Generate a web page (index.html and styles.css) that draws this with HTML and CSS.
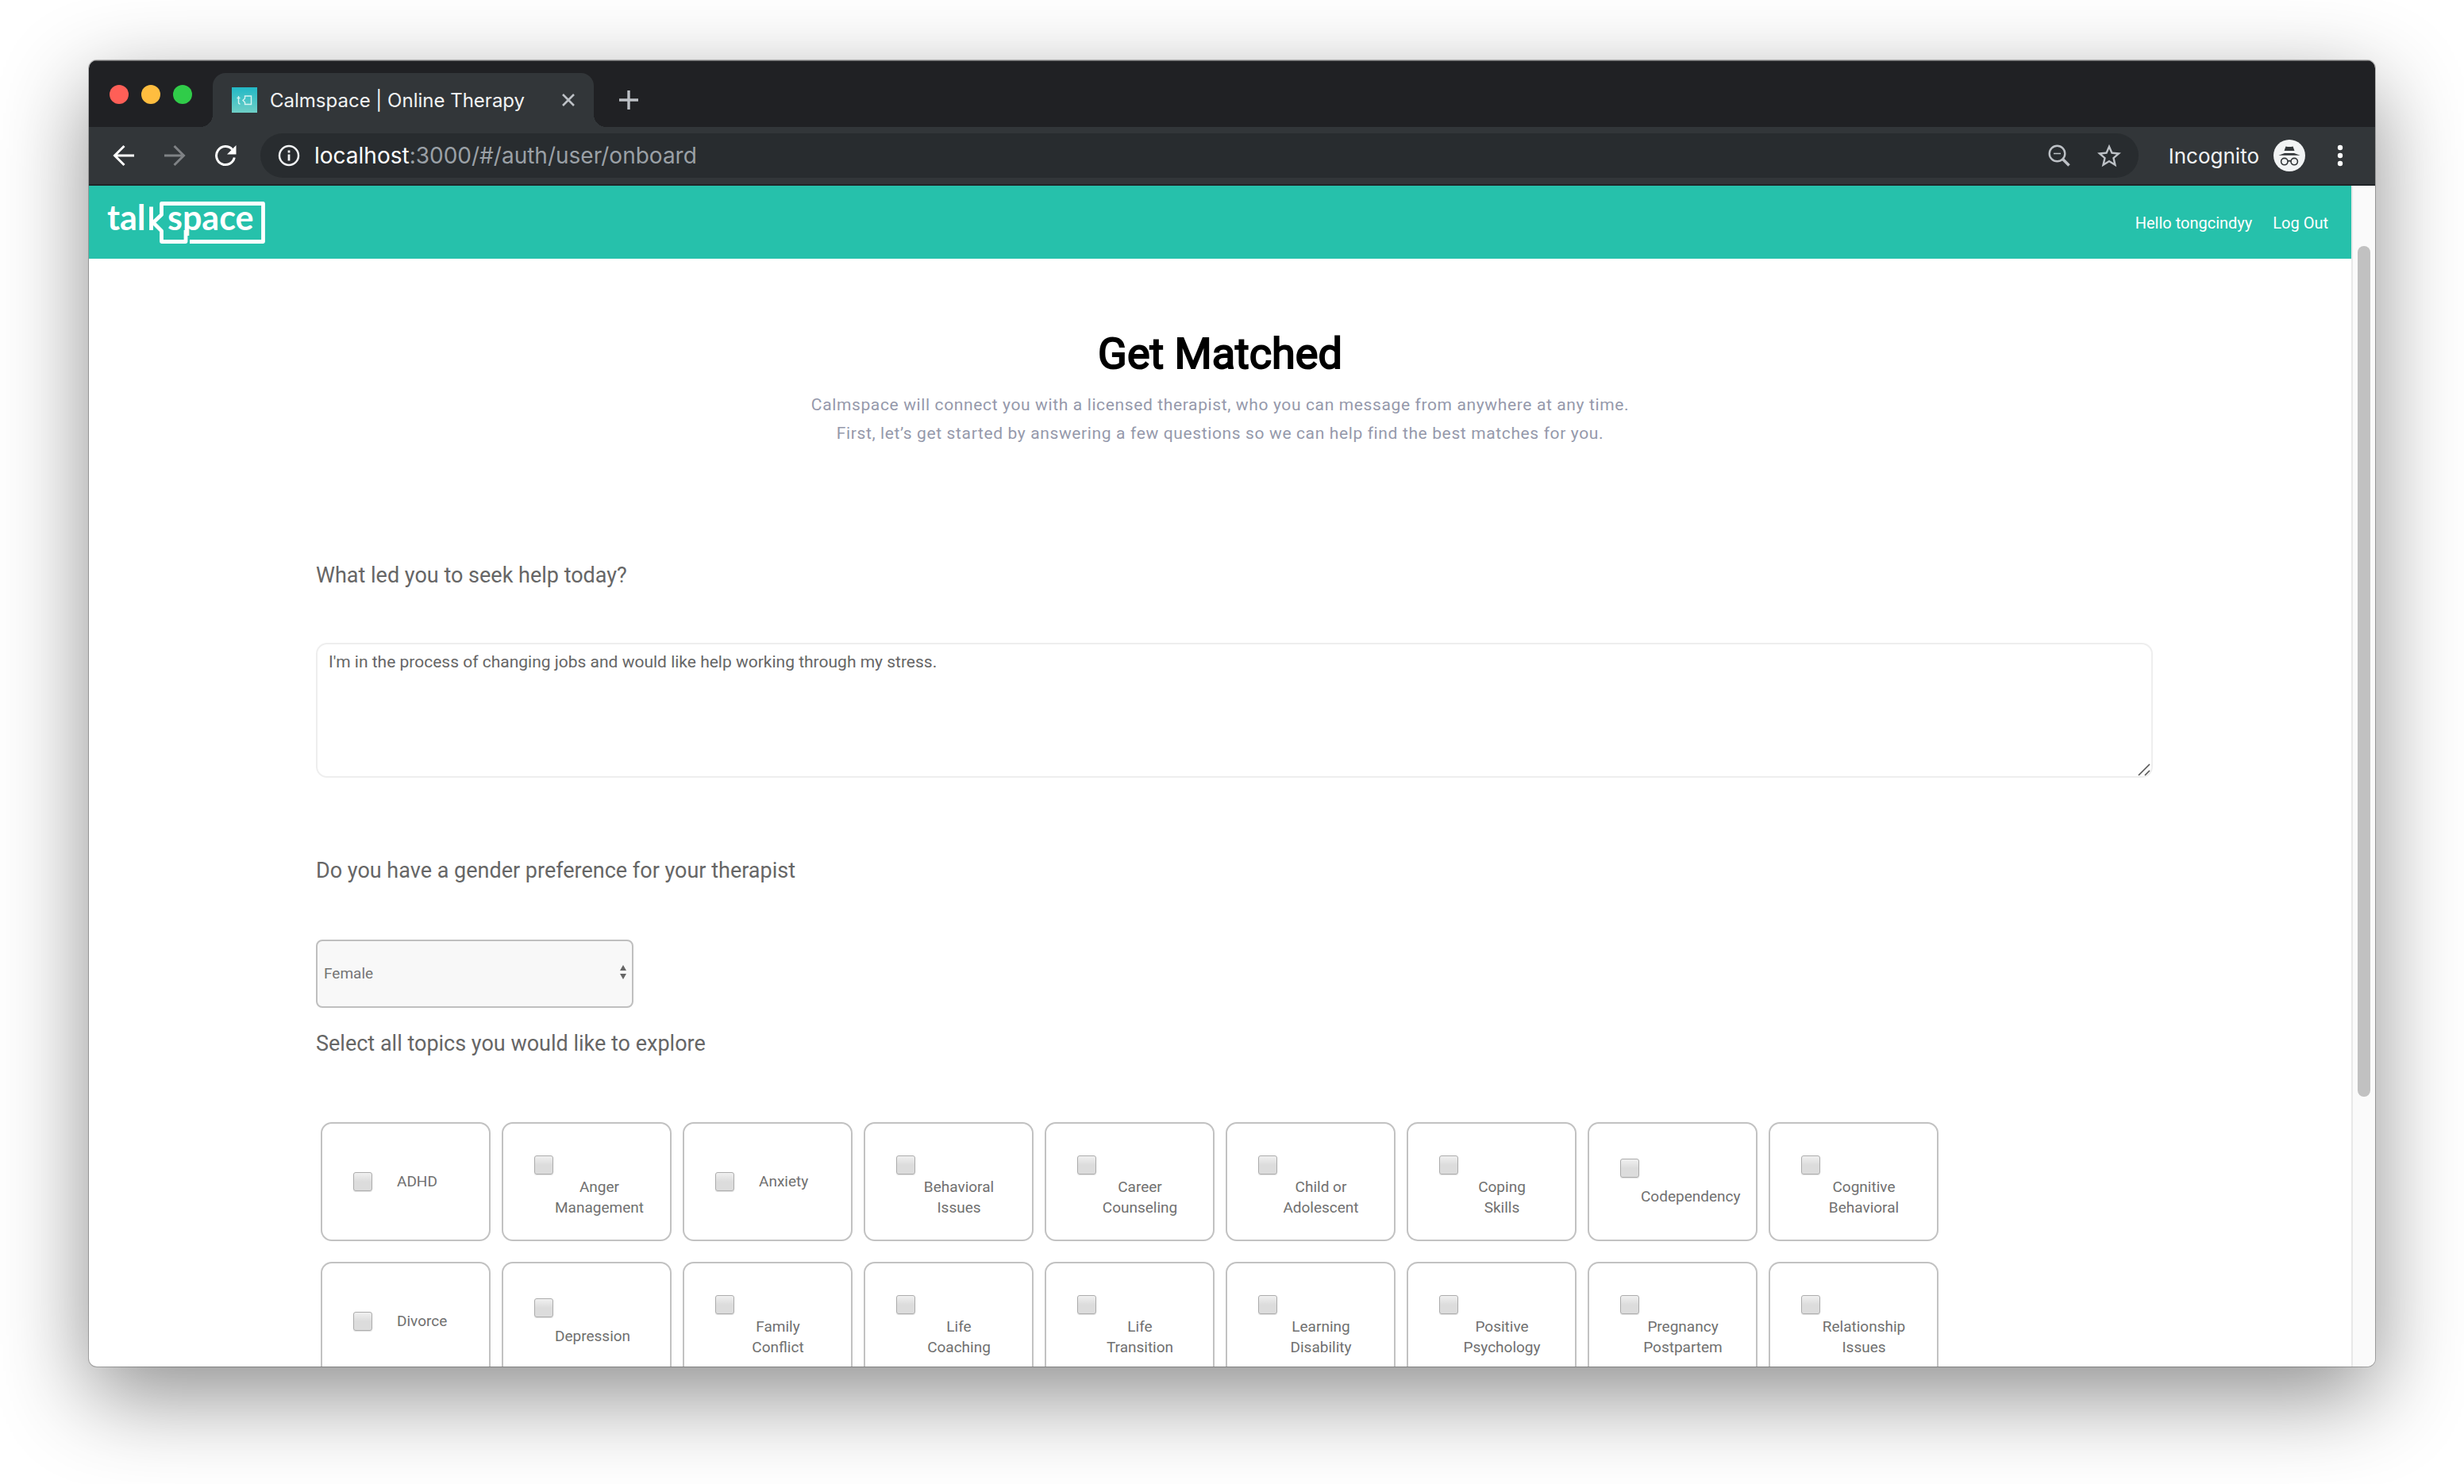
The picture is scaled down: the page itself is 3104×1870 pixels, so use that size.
FILE: index.html
```html
<!DOCTYPE html>
<html lang="en">
<head>
<meta charset="utf-8">
<title>Calmspace | Online Therapy</title>
<link rel="stylesheet" href="styles.css">
</head>
<body>
<div class="window">
  <div class="tabstrip">
    <div class="lights">
      <button class="light light-close" aria-label="Close window"></button>
      <button class="light light-min" aria-label="Minimise window"></button>
      <button class="light light-max" aria-label="Zoom window"></button>
    </div>
    <div class="tab">
      <svg class="favicon" viewBox="0 0 32 32" aria-hidden="true">
        <defs><linearGradient id="fav" x1="0" y1="0" x2="0" y2="1"><stop offset="0" stop-color="#22b8c6"/><stop offset="1" stop-color="#6fcfc6"/></linearGradient></defs>
        <rect width="32" height="32" fill="url(#fav)"/>
        <path d="M8.500 11v8q0 2 2 2M6.500 13.500h4M24.500 11h-8v3l-2.500 2.500 2.500 2.500v2.500h8z" fill="none" stroke="#d8f3f1" stroke-width="1.400"/>
      </svg>
      <span class="tab-title">Calmspace | Online Therapy</span>
      <button class="icon-btn" aria-label="Close tab">
        <svg width="18" height="18" viewBox="0 0 18 18"><path d="M2 2l14 14M16 2L2 16" stroke="#bdc1c6" stroke-width="2.600"/></svg>
      </button>
    </div>
    <button class="icon-btn new-tab" aria-label="New tab">
      <svg width="24" height="24" viewBox="0 0 24 24"><path d="M12 0v24M0 12h24" stroke="#bdc1c6" stroke-width="3.400"/></svg>
    </button>
  </div>

  <div class="toolbar">
    <div class="nav-buttons">
      <button class="icon-btn" aria-label="Back"><svg width="28" height="28" viewBox="0 0 28 28"><path d="M27 14H3M14.500 2L2.500 14l12 12" fill="none" stroke="#fff" stroke-width="3"/></svg></button>
      <button class="icon-btn" aria-label="Forward"><svg width="28" height="28" viewBox="0 0 28 28"><path d="M1 14h24M13.500 2l12 12-12 12" fill="none" stroke="#7f8285" stroke-width="3"/></svg></button>
      <button class="icon-btn" aria-label="Reload"><svg width="28" height="28" viewBox="0 0 28 28"><path d="M25.300 16.500A11.500 11.500 0 1 1 22.500 6.200" fill="none" stroke="#fff" stroke-width="3"/><path d="M27.500 1v11.500H16z" fill="#fff"/></svg></button>
    </div>
    <div class="omnibox">
      <svg width="28" height="28" viewBox="0 0 28 28" aria-hidden="true"><circle cx="14" cy="14" r="12" fill="none" stroke="#f1f3f4" stroke-width="2.500"/><path d="M14 12.500v8M14 7.500v3" stroke="#f1f3f4" stroke-width="2.800"/></svg>
      <span class="url"><span class="host">localhost</span>:3000/#/auth/user/onboard</span>
      <button class="icon-btn" aria-label="Zoom level"><svg width="28" height="28" viewBox="0 0 28 28"><circle cx="11.500" cy="11.500" r="9.800" fill="none" stroke="#bdc1c6" stroke-width="2.400"/><path d="M7 11.500h9" stroke="#bdc1c6" stroke-width="1.600"/><path d="M18.500 18.500l8 8" stroke="#bdc1c6" stroke-width="3.600"/></svg></button>
      <button class="icon-btn" aria-label="Bookmark this page"><svg width="30" height="30" viewBox="0 0 24 24"><path d="M22 9.240l-7.190-.62L12 2 9.190 8.630 2 9.240l5.460 4.730L5.820 21 12 17.270 18.180 21l-1.630-7.030zM12 15.400l-3.760 2.270 1-4.280-3.320-2.880 4.380-.38L12 6.100l1.710 4.040 4.380.38-3.320 2.880 1 4.280z" transform="translate(-2.400 -1.900) scale(1.200)" fill="#bdc1c6"/></svg></button>
    </div>
    <div class="profile">
      <span>Incognito</span>
      <svg width="40" height="40" viewBox="0 0 40 40" aria-hidden="true"><circle cx="20" cy="20" r="20" fill="#f1f3f4"/><path d="M15.500 8.500q4.500 1.200 9 0L26.500 14h-13z M6.500 19.800L14 17h12l7.500 2.800z" fill="#323639"/><g fill="none" stroke="#323639" stroke-width="1.600"><circle cx="13.800" cy="27.600" r="4.200"/><circle cx="26.200" cy="27.600" r="4.200"/><path d="M18 27.200q2-1.200 4 0"/></g></svg>
    </div>
    <button class="icon-btn" aria-label="Menu"><svg width="8" height="28" viewBox="0 0 8 28" fill="#fff"><circle cx="4" cy="4" r="3.200"/><circle cx="4" cy="14" r="3.200"/><circle cx="4" cy="24" r="3.200"/></svg></button>
  </div>

  <div class="viewport">
    <div class="page">
      <header class="site-header">
        <a href="#" aria-label="talkspace home">
          <svg class="logo" width="208" height="80" viewBox="-4 -12 208 80">
            <text class="logo-text" x="-1" y="38">tal</text>
            <text class="logo-text" x="75" y="38">space</text>
            <path d="M54.500 8.500v29.500M103 52.500H195.500V4.500H67.500V18.500L57 28.500L67.500 39V52.500H98V38" fill="none" stroke="#fff" stroke-width="4.800" stroke-linejoin="round"/>
          </svg>
        </a>
        <nav class="site-nav">
          <span>Hello tongcindyy</span>
          <a href="#">Log Out</a>
        </nav>
      </header>

      <main>
        <section class="intro">
          <h1>Get Matched</h1>
          <p>Calmspace will connect you with a licensed therapist, who you can message from anywhere at any time.<br>First, let’s get started by answering a few questions so we can help find the best matches for you.</p>
        </section>

        <form class="questions">
          <label class="question" for="reason">What led you to seek help today?</label>
          <div class="answer">
            <textarea id="reason">I'm in the process of changing jobs and would like help working through my stress.</textarea>
            <svg class="grip" width="16" height="16" viewBox="0 0 16 16" aria-hidden="true"><path d="M1 15L15 1M9 15l6-6" stroke="#555" stroke-width="1.600"/></svg>
          </div>

          <label class="question" for="gender">Do you have a gender preference for your therapist</label>
          <div class="select">
            <select id="gender"><option>Female</option><option>Male</option></select>
            <svg class="select-arrows" width="8" height="18" viewBox="0 0 8 18" fill="#666" aria-hidden="true"><path d="M4 0l4 7H0zM4 18l4-7H0z"/></svg>
          </div>

          <fieldset>
            <legend class="question">Select all topics you would like to explore</legend>
            <div class="topics">
              <label class="topic inline"><input type="checkbox"><span>ADHD</span></label>
              <label class="topic double"><input type="checkbox"><span>Anger<br>Management</span></label>
              <label class="topic inline"><input type="checkbox"><span>Anxiety</span></label>
              <label class="topic double"><input type="checkbox"><span>Behavioral<br>Issues</span></label>
              <label class="topic double"><input type="checkbox"><span>Career<br>Counseling</span></label>
              <label class="topic double"><input type="checkbox"><span>Child or<br>Adolescent</span></label>
              <label class="topic double"><input type="checkbox"><span>Coping<br>Skills</span></label>
              <label class="topic single"><input type="checkbox"><span>Codependency</span></label>
              <label class="topic double"><input type="checkbox"><span>Cognitive<br>Behavioral</span></label>
              <label class="topic inline"><input type="checkbox"><span>Divorce</span></label>
              <label class="topic single"><input type="checkbox"><span>Depression</span></label>
              <label class="topic double"><input type="checkbox"><span>Family<br>Conflict</span></label>
              <label class="topic double"><input type="checkbox"><span>Life<br>Coaching</span></label>
              <label class="topic double"><input type="checkbox"><span>Life<br>Transition</span></label>
              <label class="topic double"><input type="checkbox"><span>Learning<br>Disability</span></label>
              <label class="topic double"><input type="checkbox"><span>Positive<br>Psychology</span></label>
              <label class="topic double"><input type="checkbox"><span>Pregnancy<br>Postpartem</span></label>
              <label class="topic double"><input type="checkbox"><span>Relationship<br>Issues</span></label>
            </div>
          </fieldset>
        </form>
      </main>
    </div>
    <div class="scrollbar" aria-hidden="true"><div class="thumb"></div></div>
  </div>
</div>
</body>
</html>
```
FILE: styles.css
```css
* { box-sizing: border-box; }

body {
  margin: 0;
  height: 100vh;
  padding: 76px 112px 148px;
  display: flex;
  background: #fff;
  font-family: Roboto, sans-serif;
  color: #666;
}

button {
  border: 0;
  padding: 0;
  background: none;
}

a { color: inherit; text-decoration: none; }

.window {
  flex: 1;
  min-width: 0;
  display: flex;
  flex-direction: column;
  overflow: hidden;
  border-radius: 10px;
  background: #fff;
  box-shadow: 0 0 0 1px rgba(0, 0, 0, .24), 0 36px 112px rgba(0, 0, 0, .45);
}

/* Browser chrome */
.tabstrip {
  display: flex;
  height: 84px;
  flex: none;
  padding: 15px 26px 0;
  border-top: 1px solid #6b6b6c;
  background: #202124;
}

.lights {
  display: flex;
  gap: 16px;
  width: 130px;
  padding-top: 15px;
}

.light { width: 24px; height: 24px; border-radius: 50%; }
.light-close { background: #ff5f57; }
.light-min { background: #ffbd3f; }
.light-max { background: #30cc49; }

.tab {
  position: relative;
  width: 480px;
  display: flex;
  align-items: center;
  gap: 16px;
  padding: 0 23px 0 24px;
  border-radius: 16px 16px 0 0;
  background: #323639;
}

/* Curved feet that join the tab to the toolbar */
.tab::before,
.tab::after {
  content: "";
  position: absolute;
  bottom: 0;
  width: 16px;
  height: 16px;
}
.tab::before { right: 100%; background: radial-gradient(circle at 0 0, transparent 16px, #323639 16px); }
.tab::after { left: 100%; background: radial-gradient(circle at 100% 0, transparent 16px, #323639 16px); }

.favicon { width: 32px; height: 32px; }

.tab-title {
  flex: 1;
  font: 24px Inter, sans-serif;
  color: #f1f3f4;
  white-space: nowrap;
}

.icon-btn { display: flex; align-items: center; }
.new-tab { margin-left: 32px; }

.toolbar {
  display: flex;
  align-items: center;
  height: 74px;
  flex: none;
  padding: 0 40px 0 30px;
  border-bottom: 2px solid #202427;
  background: #323639;
}

.nav-buttons { display: flex; gap: 36px; margin-right: 30px; }

.omnibox {
  flex: 1;
  display: flex;
  align-items: center;
  height: 56px;
  padding: 0 22px;
  border-radius: 28px;
  background: #282c2f;
}

.url {
  flex: 1;
  margin-left: 18px;
  font: 28px Inter, sans-serif;
  color: #9aa0a6;
}

.host { color: #fff; }
.omnibox .icon-btn + .icon-btn { margin-left: 34px; }

.profile {
  display: flex;
  align-items: center;
  gap: 18px;
  margin: 0 40px 0 38px;
  font: 26px Inter, sans-serif;
  color: #f1f3f4;
}

/* Page */
.viewport { flex: 1; min-height: 0; display: flex; }
.page { flex: 1; min-width: 0; overflow: hidden; }

.scrollbar {
  width: 30px;
  padding: 76px 6px 0;
  border-left: 2px solid #e8e8e8;
  background: #fafafa;
}

.thumb {
  height: 76%;
  max-height: 1072px;
  border-radius: 8px;
  background: #c1c1c1;
}

.site-header {
  display: flex;
  align-items: center;
  justify-content: space-between;
  height: 92px;
  padding: 0 29px 0 20px;
  background: #26c1ab;
  color: #fff;
}

.logo { display: block; }
.logo-text { font: 700 43px Lato, sans-serif; fill: #fff; }

.site-nav {
  display: flex;
  gap: 26px;
  padding-top: 2px;
  font-size: 20px;
  line-height: 24px;
}

.intro { padding-top: 84px; text-align: center; }

/* Regular weight thickened by a stroke */
.intro h1 {
  margin: 0;
  font-size: 54px;
  font-weight: 400;
  line-height: 72px;
  color: #000;
  -webkit-text-stroke: 2px #000;
}

.intro p {
  margin: 10px 0 0;
  font-size: 21px;
  letter-spacing: .03em;
  line-height: 36px;
  color: #9599ab;
}

.questions {
  display: flex;
  flex-direction: column;
  padding: 146px 250px 0 286px;
}

.question {
  padding: 0;
  font-size: 27px;
  line-height: 30px;
}

.answer {
  position: relative;
  margin: 70px 0 102px;
}

textarea {
  display: block;
  width: 100%;
  height: 170px;
  padding: 8px 14px;
  border: 2px solid #eee;
  border-radius: 14px;
  font: 21px/28px Roboto, sans-serif;
  color: #666;
  resize: none;
}

.grip {
  position: absolute;
  right: 3px;
  bottom: 2px;
  pointer-events: none;
}

.select {
  position: relative;
  width: 400px;
  margin: 72px 0 30px;
}

select {
  display: block;
  width: 100%;
  height: 86px;
  padding: 0 8px 2px;
  border: 2px solid #bfbfbf;
  border-radius: 8px;
  appearance: none;
  background: #f8f8f8;
  font: 19px Roboto, sans-serif;
  color: #757575;
}

.select-arrows {
  position: absolute;
  top: 32px;
  right: 9px;
  pointer-events: none;
}

fieldset { margin: 0; padding: 0; border: 0; }

.topics {
  display: grid;
  grid-template-columns: repeat(auto-fill, 214px);
  gap: 26px 14px;
  max-width: 2060px;
  padding: 84px 0 26px 6px;
}

.topic {
  display: flex;
  height: 150px;
  padding-left: 39px;
  border: 2px solid #c2c2c2;
  border-radius: 14px;
  font-size: 19px;
  line-height: 26px;
  color: #707070;
}

.topic input {
  appearance: none;
  flex: none;
  width: 24px;
  height: 24px;
  margin: 0;
  border: 1px solid #acacac;
  border-radius: 3px;
  background: linear-gradient(#f0f0f0, #dcdcdc 50%);
  box-shadow: 0 1px 1px rgba(0, 0, 0, .12);
}

.inline { align-items: center; gap: 31px; }
.single, .double { flex-direction: column; align-items: flex-start; }
.single span, .double span { margin-left: 26px; }
.single { gap: 11px; padding-top: 44px; }
.double { gap: 3px; padding-top: 40px; }
.double span { min-width: 106px; text-align: center; }
```
